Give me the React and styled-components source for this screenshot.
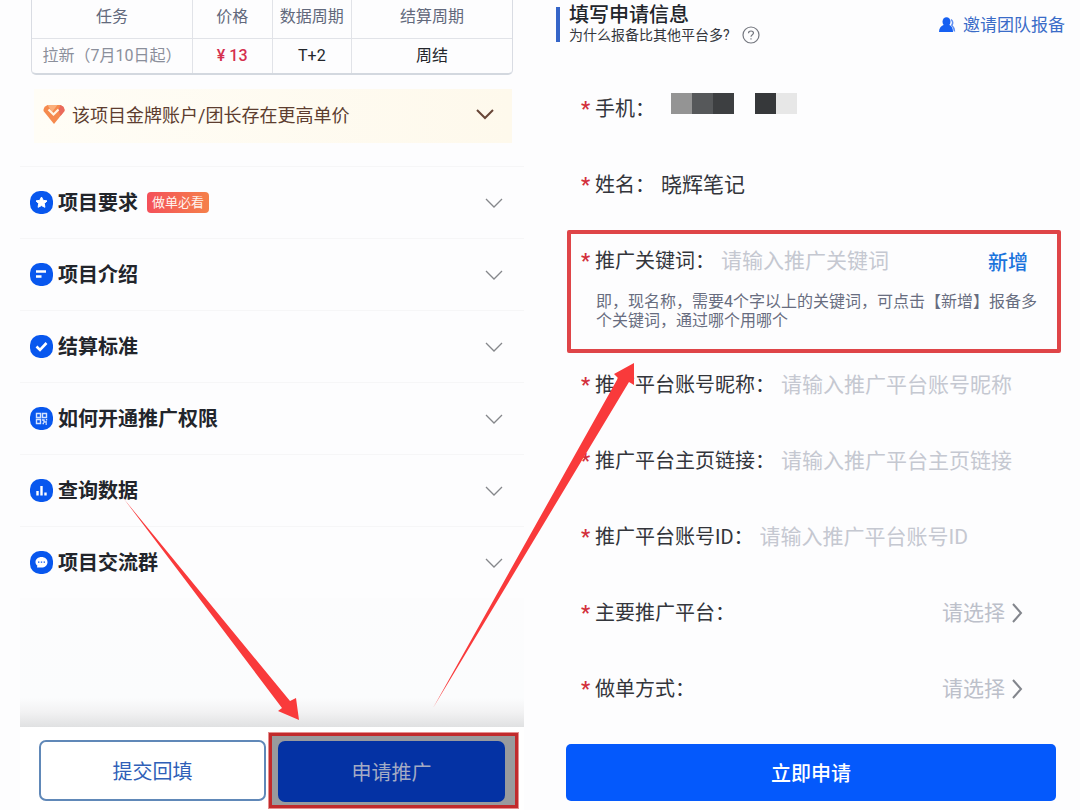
import React, { useState } from "react";
import styled, { createGlobalStyle } from "styled-components";

const GlobalStyle = createGlobalStyle`
  * {
    box-sizing: border-box;
  }

  body {
    margin: 0;
    background: #fdfdfe;
    font-family: Roboto, "Noto Sans CJK SC", sans-serif;
    color: #22252b;
  }

  button, input, select {
    font-family: inherit;
  }
`;

const Page = styled.main`
  position: relative;
  display: grid;
  grid-template-columns: 546fr 534fr;
  overflow: hidden;
`;

const ProjectPanel = styled.section`
  display: flex;
  flex-direction: column;
  padding: 0 22px 0 20px;
`;

const PriceTable = styled.table`
  margin: 0 11px;
  table-layout: fixed;
  border-collapse: separate;
  border-spacing: 0;
  border: 1px solid #d9dce3;
  border-top: none;
  border-bottom: 2px solid #d3d8df;
  border-radius: 0 0 5px 5px;
  font-size: 16px;
  line-height: 20px;
  text-align: center;
`;

const HeadCell = styled.th`
  width: ${(props) => props.$width};
  height: 39px;
  padding: 0 0 4px;
  font-weight: 400;
  color: #62697c;
  border-bottom: 1px solid #e1e3e8;

  & + & {
    border-left: 1px solid #e1e3e8;
  }
`;

const Cell = styled.td`
  height: 34px;
  padding: 0;
  white-space: nowrap;
  color: ${(props) => props.$color || "#24262b"};
  font-weight: ${(props) => (props.$strong ? 500 : 400)};

  & + & {
    border-left: 1px solid #e1e3e8;
  }
`;

const Notice = styled.button`
  display: flex;
  align-items: center;
  gap: 7px;
  height: 54px;
  margin: 14px 12px 23px 14px;
  padding: 0 18px 4px 9px;
  border: none;
  background: linear-gradient(90deg, #fffdf6, #fef9ec);
  color: #5d3d2f;
  font-size: 18px;
  cursor: pointer;

  svg:last-child {
    margin-left: auto;
  }
`;

const TopicList = styled.ul`
  margin: 0;
  padding: 0;
  list-style: none;
`;

const Topic = styled.li`
  border-top: 1px solid #f6f6f7;
`;

const TopicButton = styled.button`
  display: flex;
  align-items: center;
  gap: 5px;
  width: 100%;
  height: 71px;
  padding: 0 21px 0 10px;
  border: none;
  background: transparent;
  color: #22252b;
  cursor: pointer;

  svg:last-child {
    margin-left: auto;
  }
`;

const TopicName = styled.span`
  font-size: 20px;
  line-height: 24px;
  font-weight: 700;
`;

const Tag = styled.span`
  margin-left: 4px;
  padding: 0 5px;
  border-radius: 4px;
  background: linear-gradient(90deg, #f4505a, #f5804a);
  color: #fff3ee;
  font-size: 13px;
  line-height: 21px;
`;

const Fade = styled.div`
  flex: 1;
  min-height: 129px;
  background: linear-gradient(#fcfcfd 0, #fbfcfd 100px, #f2f2f3 114px, #e0e1e2 100%);
`;

const ProjectActions = styled.div`
  display: grid;
  grid-template-columns: 1fr 251px;
  gap: 2px;
  padding: 5px 5px 1px 19px;
  background: #fff;
`;

const OutlineButton = styled.button`
  height: 61px;
  margin-top: 8px;
  border: 2px solid #6088b8;
  border-radius: 7px;
  background: #fff;
  color: #2f5fb8;
  font-size: 20px;
  cursor: pointer;
`;

const ApplyFrame = styled.div`
  display: flex;
  padding: 5px 10px 3px 6px;
  border: 4px solid #c12a2c;
  outline: 1px solid #e58f8f;
  outline-offset: -1px;
  background: #999a9d;
`;

const ApplyButton = styled.button`
  flex: 1;
  height: 61px;
  border: none;
  border-radius: 7px;
  background: #0432a4;
  color: #a3abc4;
  font-size: 20px;
  cursor: pointer;
`;

const FormPanel = styled.section`
  padding: 7px 15px 0 10px;
`;

const FormHeader = styled.header`
  display: flex;
  justify-content: space-between;
  align-items: center;
  height: 35px;
  padding-left: 9px;
  border-left: 4px solid #3565c8;
`;

const FormTitle = styled.h1`
  margin: 0;
  font-size: 20px;
  line-height: 20px;
  font-weight: 500;
`;

const Question = styled.p`
  display: flex;
  align-items: center;
  gap: 12px;
  margin: 0;
  font-size: 14px;
  line-height: 20px;
  color: #33363d;
`;

const InviteLink = styled.a`
  display: flex;
  align-items: center;
  gap: 7px;
  color: #3a6cc8;
  font-size: 17px;
  line-height: 24px;
  text-decoration: none;
`;

const Form = styled.form`
  padding-top: 29px;
`;

const Field = styled.div`
  display: flex;
  align-items: center;
  height: 76px;
  padding: 0 37px 0 25px;
`;

const Label = styled.label`
  flex: none;
  margin-right: 6px;
  font-size: 20px;
  line-height: 28px;
  color: #33353b;

  &::before {
    content: "*";
    display: inline-block;
    width: 14px;
    font-weight: 700;
    color: #d3303c;
  }
`;

const TextInput = styled.input`
  flex: 1;
  min-width: 0;
  padding: 0;
  border: none;
  outline: none;
  background: transparent;
  font-size: 21px;
  line-height: 28px;
  color: #33353b;

  &::placeholder {
    color: #c5c8d1;
    opacity: 1;
  }
`;

const Select = styled.select`
  flex: 1;
  min-width: 0;
  margin-right: 5px;
  padding: 0;
  border: none;
  outline: none;
  appearance: none;
  background: transparent;
  font-size: 21px;
  line-height: 28px;
  color: #bcc0ca;
  text-align: right;
  text-align-last: right;
  cursor: pointer;
`;

const HiddenPhone = styled.output`
  display: flex;
  margin: 0 0 12px 10px;
`;

const Block = styled.span`
  width: 21px;
  height: 21px;
  background: ${(props) => props.$color};
`;

const KeywordGroup = styled.div`
  position: relative;
  padding-bottom: 17px;

  &::after {
    content: "";
    position: absolute;
    inset: 7px 4px -6px 11px;
    border: 4px solid #df4548;
    border-radius: 2px;
    pointer-events: none;
  }
`;

const AddButton = styled.button`
  padding: 0;
  border: none;
  background: transparent;
  color: #1b74dc;
  font-size: 20px;
  font-weight: 500;
  cursor: pointer;
`;

const Hint = styled.p`
  margin: -7px 20px 0 40px;
  font-size: 16px;
  line-height: 19px;
  color: #686d80;
`;

const SubmitButton = styled.button`
  display: block;
  width: calc(100% - 19px);
  height: 57px;
  margin: 17px 9px 0 10px;
  border: none;
  border-radius: 5px;
  background: #0459fc;
  color: #fff;
  font-size: 20px;
  font-weight: 500;
  cursor: pointer;
`;

const Arrows = styled.svg`
  position: absolute;
  top: 0;
  left: 0;
  pointer-events: none;
`;

const ChevronDown = ({ color, width }) => (
  <svg width="18" height="12" viewBox="0 0 18 12" fill="none">
    <path d="M1 2l8 8 8-8" stroke={color} strokeWidth={width} />
  </svg>
);

const ChevronRight = () => (
  <svg width="18" height="20" viewBox="0 0 18 20" fill="none">
    <path d="M3 1l8 9-8 9" stroke="#83868d" strokeWidth="2" />
  </svg>
);

const Diamond = () => (
  <svg width="22" height="20" viewBox="0 0 22 20" fill="none">
    <path d="M4.500 1h13Q22 3 21.500 7L11 20 .5 7Q0 3 4.500 1z" fill="#f58a4e" />
    <path d="M4.500 1h10L9 8z" fill="#fbb07c" />
    <path d="M17.500 1Q22 3 21.500 7l-4 5-2-6z" fill="#e9695c" />
    <path d="M5.500 5.500l5 5 5-5" stroke="#fff5e5" strokeWidth="2.200" />
  </svg>
);

const People = () => (
  <svg width="17" height="16" viewBox="0 0 17 16" fill="#1660f2">
    <ellipse cx="7.500" cy="4.800" rx="4" ry="4.500" />
    <path d="M4.500 8h6c2.300 1 3.500 3.500 3.500 7H0c0-3.500 1.800-6 4.500-7z" />
    <path d="M12 2.500c2 1.800 2 4 .8 5.700 1.700 1.500 2.500 3.500 2.700 6.300" stroke="#5f8ff2" strokeWidth="1.500" fill="none" />
  </svg>
);

const QuestionIcon = () => (
  <svg width="18" height="18" viewBox="0 0 18 18" fill="none" stroke="#74777f" strokeWidth="1.200">
    <circle cx="9" cy="9" r="8" />
    <path d="M6.500 7.200C6.500 5.700 7.500 5 9 5s2.500.8 2.500 2.100C11.500 8.700 9 8.800 9 10.800M9 12.200v1.300" />
  </svg>
);

const glyphs = {
  star: (
    <path
      d="M11.500 6l1.700 3.300 3.800.6-2.700 2.600.6 3.800-3.400-1.700-3.400 1.700.6-3.800L6 9.900l3.800-.6z"
      fill="#fff"
      stroke="#fff"
      strokeLinejoin="round"
    />
  ),
  lines: <path d="M6 8.500h10M6 13.500h5.500" stroke="#fff" strokeWidth="2.400" />,
  check: <path d="M6.500 11.500l3.500 3.500 6.500-7" stroke="#fff" strokeWidth="2.600" />,
  code: (
    <g stroke="#d5e3ff" strokeWidth="1.400">
      <path d="M6.500 6.500h4v4h-4zM12.500 6.500h4v4h-4zM6.500 12.500h4v4h-4z" />
      <path d="M12 13h2v2h3M12.500 16.500h1.500M16.500 12v1.500M15.500 17h1.500" />
    </g>
  ),
  bars: <path d="M7.500 16.500V12M11.500 16.500V7M15.500 16.500v-3" stroke="#fff" strokeWidth="2.400" />,
  chat: (
    <g>
      <path d="M11.500 6c3.500 0 6 2.200 6 5.200s-2.500 5.300-6 5.300H7l.3-2c-1.100-.8-1.800-2-1.800-3.300 0-3 2.500-5.200 6-5.200z" fill="#fff" />
      <path d="M8 11.200h1.400M10.800 11.200h1.400M13.600 11.200H15" stroke="#0857ee" strokeWidth="1.300" />
    </g>
  ),
};

const TopicIcon = ({ name }) => (
  <svg width="23" height="23" viewBox="0 0 23 23" fill="none">
    <rect width="23" height="23" rx="10" fill="#0857ee" />
    {glyphs[name]}
  </svg>
);

const topics = [
  { icon: "star", name: "项目要求", tag: "做单必看" },
  { icon: "lines", name: "项目介绍" },
  { icon: "check", name: "结算标准" },
  { icon: "code", name: "如何开通推广权限" },
  { icon: "bars", name: "查询数据" },
  { icon: "chat", name: "项目交流群" },
];

const accountFields = [
  { id: "nickname", label: "推广平台账号昵称", placeholder: "请输入推广平台账号昵称" },
  { id: "link", label: "推广平台主页链接", placeholder: "请输入推广平台主页链接" },
  { id: "account", label: "推广平台账号ID", placeholder: "请输入推广平台账号ID" },
];

const selectFields = [
  { id: "platform", label: "主要推广平台" },
  { id: "method", label: "做单方式" },
];

const App = () => {
  const [values, setValues] = useState({ name: "晓辉笔记" });

  const handleChange = (e) => {
    setValues({ ...values, [e.target.id]: e.target.value });
  };

  return (
    <>
      <GlobalStyle />
      <Page>
        <ProjectPanel>
          <PriceTable>
            <thead>
              <tr>
                <HeadCell $width="33.3%">任务</HeadCell>
                <HeadCell $width="16.6%">价格</HeadCell>
                <HeadCell $width="16.6%">数据周期</HeadCell>
                <HeadCell>结算周期</HeadCell>
              </tr>
            </thead>
            <tbody>
              <tr>
                <Cell $color="#8b8f9b">拉新（7月10日起）</Cell>
                <Cell $color="#d5304e" $strong>¥ 13</Cell>
                <Cell>T+2</Cell>
                <Cell>周结</Cell>
              </tr>
            </tbody>
          </PriceTable>
          <Notice type="button">
            <Diamond />
            <span>该项目金牌账户/团长存在更高单价</span>
            <ChevronDown color="#684637" width="2" />
          </Notice>
          <TopicList>
            {topics.map((topic) => (
              <Topic key={topic.icon}>
                <TopicButton type="button">
                  <TopicIcon name={topic.icon} />
                  <TopicName>{topic.name}</TopicName>
                  {topic.tag && <Tag>{topic.tag}</Tag>}
                  <ChevronDown color="#85878b" width="1.300" />
                </TopicButton>
              </Topic>
            ))}
          </TopicList>
          <Fade />
          <ProjectActions>
            <OutlineButton type="button">提交回填</OutlineButton>
            <ApplyFrame>
              <ApplyButton type="button">申请推广</ApplyButton>
            </ApplyFrame>
          </ProjectActions>
        </ProjectPanel>

        <FormPanel>
          <FormHeader>
            <div>
              <FormTitle>填写申请信息</FormTitle>
              <Question>
                为什么报备比其他平台多?
                <QuestionIcon />
              </Question>
            </div>
            <InviteLink href="#invite">
              <People />
              邀请团队报备
            </InviteLink>
          </FormHeader>
          <Form onSubmit={(e) => e.preventDefault()}>
            <Field>
              <Label htmlFor="phone">手机：</Label>
              <HiddenPhone id="phone">
                <Block $color="#949494" />
                <Block $color="#56585a" />
                <Block $color="#3d3f41" />
                <Block $color="transparent" />
                <Block $color="#36383a" />
                <Block $color="#e7e7e7" />
              </HiddenPhone>
            </Field>
            <Field>
              <Label htmlFor="name">姓名：</Label>
              <TextInput id="name" value={values.name} onChange={handleChange} />
            </Field>
            <KeywordGroup>
              <Field>
                <Label htmlFor="keyword">推广关键词：</Label>
                <TextInput
                  id="keyword"
                  placeholder="请输入推广关键词"
                  value={values.keyword || ""}
                  onChange={handleChange}
                />
                <AddButton type="button">新增</AddButton>
              </Field>
              <Hint>
                即，现名称，需要4个字以上的关键词，可点击【新增】报备多个关键词，通过哪个用哪个
              </Hint>
            </KeywordGroup>
            {accountFields.map((field) => (
              <Field key={field.id}>
                <Label htmlFor={field.id}>{field.label}：</Label>
                <TextInput
                  id={field.id}
                  placeholder={field.placeholder}
                  value={values[field.id] || ""}
                  onChange={handleChange}
                />
              </Field>
            ))}
            {selectFields.map((field) => (
              <Field key={field.id}>
                <Label htmlFor={field.id}>{field.label}：</Label>
                <Select id={field.id} value={values[field.id] || ""} onChange={handleChange}>
                  <option value="">请选择</option>
                </Select>
                <ChevronRight />
              </Field>
            ))}
            <SubmitButton type="submit">立即申请</SubmitButton>
          </Form>
        </FormPanel>

        <Arrows width="1080" height="810" viewBox="0 0 1080 810" fill="#f93a3b">
          <path d="M124 499L290 701L296 698L299 720L278 711L282 708Z" />
          <path d="M433 708L618 378L614 374L634 363L634 385L629 382Z" />
        </Arrows>
      </Page>
    </>
  );
};

export default App;
